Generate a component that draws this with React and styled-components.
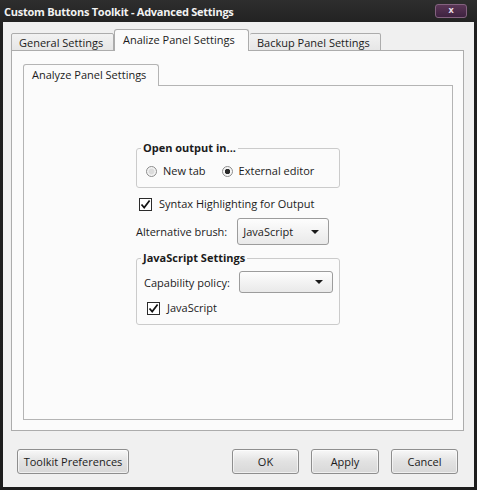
import React from 'react'
import styled, { createGlobalStyle } from 'styled-components'

const Global = createGlobalStyle`
html, body {
  margin: 0;
  padding: 0;
  background: #1c1c1c;
}
body {
  font-family: "Open Sans", "DejaVu Sans", sans-serif;
  font-size: 11px;
  color: #1b1b1b;
}
`

const CheckMark = () => (
  <svg width="11" height="11" viewBox="0 0 11 11">
    <path d="M1.5 5.5 L4.2 8.6 L9.6 1.6" fill="none" stroke="#111" strokeWidth="1.7" />
  </svg>
)

const Radio = ({ checked, children }) => (
  <RadioLabel>
    <RadioCircle $checked={checked} />
    {children}
  </RadioLabel>
)

const Check = ({ children, $indent }) => (
  <CheckLabel $indent={$indent}>
    <CheckBox>
      <CheckMark />
    </CheckBox>
    {children}
  </CheckLabel>
)

const Select = ({ value, width, height }) => (
  <SelectBox $width={width} $height={height}>
    <span>{value}</span>
    <Arrow />
  </SelectBox>
)

export default function App() {
  return (
    <>
      <Global />
      <Window>
        <TitleBar>
          <Title>Custom Buttons Toolkit - Advanced Settings</Title>
          <CloseButton>x</CloseButton>
        </TitleBar>
        <Client>
          <Main>
            <TabRow>
              <Tab $w={103}>General Settings</Tab>
              <Tab $w={135} $active>Analize Panel Settings</Tab>
              <Tab $w={131}>Backup Panel Settings</Tab>
            </TabRow>
            <Panel>
              <InnerTab>Analyze Panel Settings</InnerTab>
              <InnerPanel>
                <Column>
                  <Group>
                    <Legend>Open output in...</Legend>
                    <RadioRow>
                      <Radio>New tab</Radio>
                      <Radio checked>External editor</Radio>
                    </RadioRow>
                  </Group>
                  <Check $indent={3}>Syntax Highlighting for Output</Check>
                  <FieldRow>
                    <span>Alternative brush:</span>
                    <Select value="JavaScript" width={92} height={27} />
                  </FieldRow>
                  <Group $js>
                    <Legend>JavaScript Settings</Legend>
                    <GroupBody>
                      <FieldRow $gap={9}>
                        <span>Capability policy:</span>
                        <Select value="" width={94} height={22} />
                      </FieldRow>
                      <Check $indent={3}>JavaScript</Check>
                    </GroupBody>
                  </Group>
                </Column>
              </InnerPanel>
            </Panel>
          </Main>
          <Footer>
            <Button $w={112}>Toolkit Preferences</Button>
            <Spacer />
            <Button $w={67}>OK</Button>
            <Button $w={68}>Apply</Button>
            <Button $w={67}>Cancel</Button>
          </Footer>
        </Client>
      </Window>
    </>
  )
}

const Window = styled.div`
width: 477px;
height: 490px;
box-sizing: border-box;
background: linear-gradient(#2e2e2e, #1f1f1f 30px, #1d1d1d);
display: flex;
flex-direction: column;
`

const TitleBar = styled.div`
height: 22px;
display: flex;
align-items: center;
justify-content: space-between;
padding: 0 10px 0 4px;
`

const Title = styled.div`
color: #f2f2f2;
font-weight: bold;
font-size: 11px;
letter-spacing: -0.25px;
`

const CloseButton = styled.div`
width: 30px;
height: 12px;
margin-top: -1px;
border: 1px solid #83627f;
border-radius: 3px;
background: linear-gradient(#5a3656, #3e2240);
color: #e8dde6;
font-size: 9px;
line-height: 10px;
font-weight: bold;
text-align: center;
`

const Client = styled.div`
flex: 1;
margin: 0 3px 3px 3px;
background: #f0f0f0;
display: flex;
flex-direction: column;
`

const Main = styled.div`
padding: 7px 10px 0 8px;
`

const TabRow = styled.div`
display: flex;
align-items: flex-end;
height: 22px;
position: relative;
z-index: 1;
margin-bottom: -1px;
`

const Tab = styled.div`
box-sizing: border-box;
width: ${p => p.$w}px;
height: ${p => (p.$active ? 22 : 18)}px;
padding-left: ${p => (p.$active ? 8 : 7)}px;
margin-right: ${p => (p.$active ? 1 : 0)}px;
border: 1px solid #acacac;
border-bottom: ${p => (p.$active ? 'none' : '1px solid #acacac')};
border-left: ${p => (p.$active ? '1px solid #acacac' : 'none')};
&:first-child { border-left: 1px solid #acacac; }
border-radius: ${p => (p.$active ? '3px 3px 0 0' : '2px 2px 0 0')};
background: ${p => (p.$active ? '#fbfbfb' : 'linear-gradient(#f2f2f2, #e6e6e6)')};
line-height: ${p => (p.$active ? 19 : 17)}px;
white-space: nowrap;
`

const Panel = styled.div`
box-sizing: border-box;
height: 381px;
border: 1px solid #acacac;
background: #fbfbfb;
padding: 13px 10px 10px 11px;
display: flex;
flex-direction: column;
`

const InnerTab = styled.div`
box-sizing: border-box;
width: 136px;
height: 22px;
padding-left: 8px;
border: 1px solid #b4b4b4;
border-bottom: none;
border-radius: 3px 3px 0 0;
background: #fbfbfb;
line-height: 20px;
margin-bottom: -1px;
position: relative;
z-index: 1;
`

const InnerPanel = styled.div`
flex: 1;
border: 1px solid #b4b4b4;
background: #fbfbfb;
display: flex;
justify-content: center;
padding-top: 54px;
`

const Column = styled.div`
width: 204px;
display: flex;
flex-direction: column;
`

const Group = styled.fieldset`
margin: 0;
padding: 0 0 8px 0;
border: 1px solid #cbcbcb;
border-radius: 3px;
min-width: 0;
margin-top: ${p => (p.$js ? 5 : 0)}px;
`

const Legend = styled.legend`
font-weight: bold;
padding: 0 2px;
margin-left: 4px;
line-height: 16px;
`

const RadioRow = styled.div`
display: flex;
gap: 16px;
padding: 7px 0 0 9px;
`

const RadioLabel = styled.label`
display: flex;
align-items: center;
gap: 6px;
line-height: 16px;
white-space: nowrap;
`

const RadioCircle = styled.span`
box-sizing: border-box;
width: 11px;
height: 11px;
border-radius: 50%;
border: 1px solid #8c8c8c;
background: ${p =>
  p.$checked
    ? 'radial-gradient(circle, #2a2a2a 0 2.4px, #f6f6f6 3px)'
    : 'radial-gradient(circle, #dcdcdc 0 2.5px, #f4f4f4 3.5px)'};
`

const CheckLabel = styled.label`
display: flex;
align-items: center;
gap: 7px;
line-height: 16px;
white-space: nowrap;
margin: 8px 0 0 ${p => p.$indent || 0}px;
`

const CheckBox = styled.span`
box-sizing: border-box;
width: 13px;
height: 13px;
border: 1px solid #2b2b2b;
background: #fff;
display: flex;
align-items: center;
justify-content: center;
`

const FieldRow = styled.div`
display: flex;
align-items: center;
gap: ${p => p.$gap || 10}px;
margin-top: 6px;
white-space: nowrap;
`

const GroupBody = styled.div`
padding: 0 5px 0 7px;
& > ${FieldRow} { margin-top: 5px; }
& > label { margin-top: 7px; }
`

const SelectBox = styled.div`
box-sizing: border-box;
flex-shrink: 0;
width: ${p => p.$width}px;
height: ${p => p.$height}px;
border: 1px solid #9c9c9c;
border-radius: 3px;
background: linear-gradient(#fdfdfd, #e9e9e9);
display: flex;
align-items: center;
justify-content: space-between;
padding: 0 9px 0 5px;
`

const Arrow = styled.span`
width: 0;
height: 0;
border-left: 4px solid transparent;
border-right: 4px solid transparent;
border-top: 4px solid #1a1a1a;
`

const Footer = styled.div`
display: flex;
align-items: center;
gap: 12px;
padding: 18px 16px 0 14px;
`

const Spacer = styled.div`
flex: 1;
`

const Button = styled.div`
box-sizing: border-box;
width: ${p => p.$w}px;
height: 25px;
border: 1px solid #8e8e8e;
border-radius: 3px;
background: linear-gradient(#f8f8f8, #e2e2e2 50%, #d8d8d8);
box-shadow: inset 0 0 0 1px rgba(255, 255, 255, 0.6);
display: flex;
align-items: center;
justify-content: center;
white-space: nowrap;
`
